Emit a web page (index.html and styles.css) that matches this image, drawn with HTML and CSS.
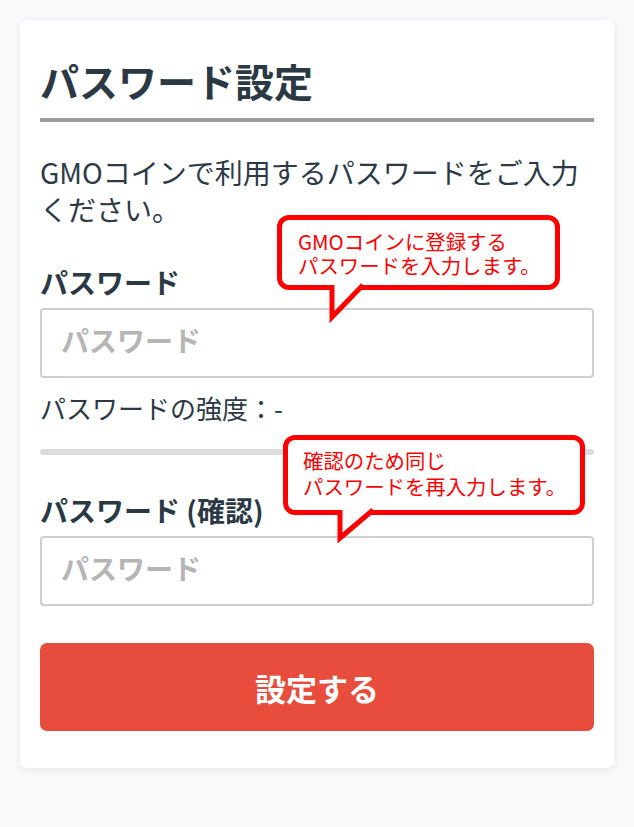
FILE: index.html
```html
<!DOCTYPE html>
<html lang="ja">
<head>
<meta charset="utf-8">
<title>パスワード設定</title>
<link rel="stylesheet" href="styles.css">
</head>
<body>
<div class="card">
  <h1 class="title">パスワード設定</h1>
  <div class="divider"></div>
  <p class="lead">GMOコインで利用するパスワードをご入力ください。</p>
  <label class="label label-first">パスワード</label>
  <input class="field" type="password" placeholder="パスワード">
  <p class="strength">パスワードの強度：-</p>
  <div class="bar"></div>
  <label class="label label-second">パスワード (確認)</label>
  <input class="field" type="password" placeholder="パスワード">
  <button class="submit" type="button">設定する</button>

  <div class="callout callout-one">
    GMOコインに登録する<br>パスワードを入力します。
    <svg class="tail tail-one" width="44" height="42" viewBox="0 0 44 42">
      <polygon points="4,0 4,37 40,0" fill="#fff"/>
      <polyline points="4,5 4,37 35,5" fill="none" stroke="#ff0000" stroke-width="5" stroke-linejoin="miter" stroke-miterlimit="10"/>
    </svg>
  </div>

  <div class="callout callout-two">
    確認のため同じ<br>パスワードを再入力します。
    <svg class="tail tail-two" width="44" height="42" viewBox="0 0 44 42">
      <polygon points="4,5 4,38 40,5" fill="#fff"/>
      <polyline points="4,10 4,38 37,10" fill="none" stroke="#ff0000" stroke-width="5" stroke-linejoin="miter" stroke-miterlimit="10"/>
    </svg>
  </div>
</div>
</body>
</html>
```
FILE: styles.css
```css
html, body {
  margin: 0;
  padding: 0;
}
body {
  background: #f8f9fb;
  padding: 20px;
  font-family: "Noto Sans CJK JP", "Noto Sans", sans-serif;
  color: #2c3a47;
}
.card {
  position: relative;
  background: #fff;
  border-radius: 8px;
  box-shadow: 0 2px 8px rgba(0, 0, 0, 0.07);
  padding: 33px 20px 37px;
  display: flex;
  flex-direction: column;
  width: 594px;
  box-sizing: border-box;
}
.title {
  margin: 0;
  font-size: 39px;
  line-height: 54px;
  font-weight: 700;
  color: #2b3945;
}
.divider {
  margin-top: 11px;
  height: 4px;
  background: #9b9b9b;
}
.lead {
  margin: 32px 0 0;
  font-size: 28px;
  line-height: 37px;
  font-weight: 400;
}
.label {
  display: block;
  font-size: 28px;
  line-height: 37px;
  font-weight: 700;
  color: #2b3945;
}
.label-first {
  margin-top: 36px;
}
.label-second {
  margin-top: 37px;
}
.field {
  margin-top: 7px;
  height: 70px;
  box-sizing: border-box;
  border: 2px solid #cfcfcf;
  border-radius: 4px;
  padding: 0 19px 7px;
  font-family: "Noto Sans CJK JP", "Noto Sans", sans-serif;
  font-size: 28px;
  font-weight: 700;
  color: #2c3a47;
  background: #fff;
  outline: none;
}
.field::placeholder {
  color: #b5b5b5;
  opacity: 1;
}
.strength {
  margin: 12px 0 0;
  font-size: 26px;
  line-height: 36px;
  font-weight: 400;
}
.bar {
  margin-top: 23px;
  height: 6px;
  border-radius: 3px;
  background: #dcdcdc;
}
.submit {
  margin-top: 37px;
  height: 88px;
  border: none;
  border-radius: 7px;
  background: #e74c3c;
  color: #fff;
  font-family: "Noto Sans CJK JP", "Noto Sans", sans-serif;
  font-size: 31px;
  font-weight: 700;
}
.callout {
  position: absolute;
  box-sizing: border-box;
  border: 5px solid #ff0000;
  border-radius: 12px;
  background: #fff;
  color: #ff0000;
  font-size: 20.4px;
  font-weight: 400;
}
.callout-one {
  left: 257px;
  top: 195px;
  width: 283px;
  height: 75px;
  padding: 9px 0 0 16px;
  line-height: 24px;
}
.callout-two {
  left: 263px;
  top: 415px;
  width: 302px;
  height: 80px;
  padding: 7px 0 0 15px;
  line-height: 26px;
}
.tail {
  position: absolute;
  overflow: visible;
}
.tail-one {
  left: 46px;
  top: 60px;
}
.tail-two {
  left: 48px;
  top: 60px;
}
```
